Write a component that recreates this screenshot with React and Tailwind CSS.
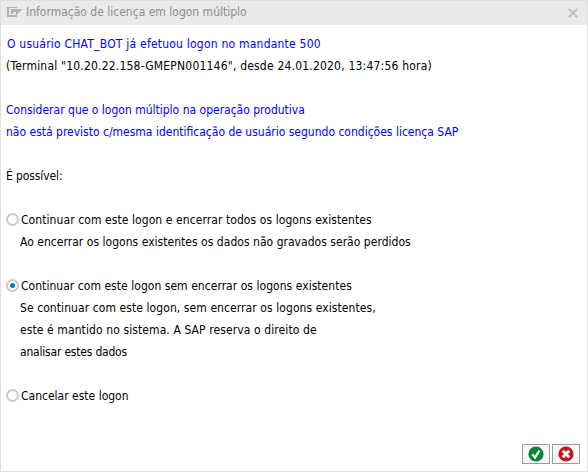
import React from "react";

function Line({ className = "", children }) {
  return (
    <p className={"h-[22px] whitespace-pre leading-[22px] " + className}>
      <span>{children}</span>
    </p>
  );
}

function Option({ checked = false, label, className = "", children }) {
  return (
    <div>
      <div className="flex h-[22px] items-center" role="radio" aria-checked={checked}>
        <span className="mb-px flex h-[13px] w-[13px] shrink-0 items-center justify-center rounded-full border-2 border-[#c9c9c9] bg-white">
          {checked && <span className="h-[5px] w-[5px] rounded-full bg-[#007cc0]" />}
        </span>
        <Line className={"ml-[2px] " + className}>{label}</Line>
      </div>
      <div className="pl-[14px]">{children}</div>
    </div>
  );
}

function ExitIcon() {
  return (
    <svg width="16" height="12" viewBox="0 0 16 12" shapeRendering="crispEdges">
      <path d="M0 0H10V1H2V8H10V10H0Z" fill="#b2b2b2" />
      <path d="M4 2H15V3H14V4H13V5H12V6H11V7H10V8H9V5H6V7H4Z" fill="#b2b2b2" />
    </svg>
  );
}

function CloseIcon() {
  return (
    <svg width="10" height="10" viewBox="0 0 10 10">
      <path d="M0.8 0.8L9.2 9.2M9.2 0.8L0.8 9.2" stroke="#c3c3c3" strokeWidth="2.3" />
    </svg>
  );
}

function ActionButton({ label, color, children }) {
  return (
    <button aria-label={label} className="flex h-5 w-7 items-center justify-center border border-[#9c9c9c] bg-[#f7f7f7]">
      <svg width="16" height="16" viewBox="0 0 16 16">
        <circle cx="8" cy="8" r="7.6" fill={color} />
        {children}
      </svg>
    </button>
  );
}

export default function App() {
  return (
    <div className="flex h-[472px] w-[588px] flex-col border border-[#dfdfdf] bg-white font-['DejaVu_Sans_Condensed','DejaVu_Sans',sans-serif] text-[12px] text-black [font-stretch:condensed]">
      <header className="flex h-6 shrink-0 items-center bg-[#eaeaea] pl-[6px] pr-[9px] text-[#8c8c8c]">
        <ExitIcon />
        <h1 className="mb-[2px] ml-[3px] whitespace-pre leading-[22px]">Informação de licença em logon múltiplo</h1>
        <span className="ml-auto"><CloseIcon /></span>
      </header>
      <main className="flex-1 pl-[5px] pt-2">
        <Line className="pl-px tracking-[0.22px] text-[#0000ff]">O usuário CHAT_BOT já efetuou logon no mandante 500</Line>
        <Line className="tracking-[0.2px]">(Terminal "10.20.22.158-GMEPN001146", desde 24.01.2020, 13:47:56 hora)</Line>
        <div className="mt-[22px] text-[#0000ff]">
          <Line>Considerar que o logon múltiplo na operação produtiva</Line>
          <Line>não está previsto c/mesma identificação de usuário segundo condições licença SAP</Line>
        </div>
        <Line className="mt-[22px] tracking-[-0.1px]">É possível:</Line>
        <div className="mt-[22px] flex flex-col gap-[22px]" role="radiogroup">
          <Option className="tracking-[0.08px]" label="Continuar com este logon e encerrar todos os logons existentes">
            <Line className="tracking-[0.03px]">Ao encerrar os logons existentes os dados não gravados serão perdidos</Line>
          </Option>
          <Option checked className="tracking-[0.04px]" label="Continuar com este logon sem encerrar os logons existentes">
            <Line className="tracking-[0.08px]">Se continuar com este logon, sem encerrar os logons existentes,</Line>
            <Line className="tracking-[0.1px]">este é mantido no sistema. A SAP reserva o direito de</Line>
            <Line className="tracking-[-0.2px]">analisar estes dados</Line>
          </Option>
          <Option label="Cancelar este logon" />
        </div>
      </main>
      <footer className="flex shrink-0 justify-end gap-[2px] pb-[7px] pr-[7px]">
        <ActionButton label="Confirmar" color="#07843b">
          <path d="M4.3 8.2L7 11.5L11.4 4.5" fill="none" stroke="white" strokeWidth="2.2" />
        </ActionButton>
        <ActionButton label="Cancelar" color="#c8141e">
          <path d="M4.8 4.8L11.2 11.2M11.2 4.8L4.8 11.2" stroke="white" strokeWidth="2.8" />
        </ActionButton>
      </footer>
    </div>
  );
}
